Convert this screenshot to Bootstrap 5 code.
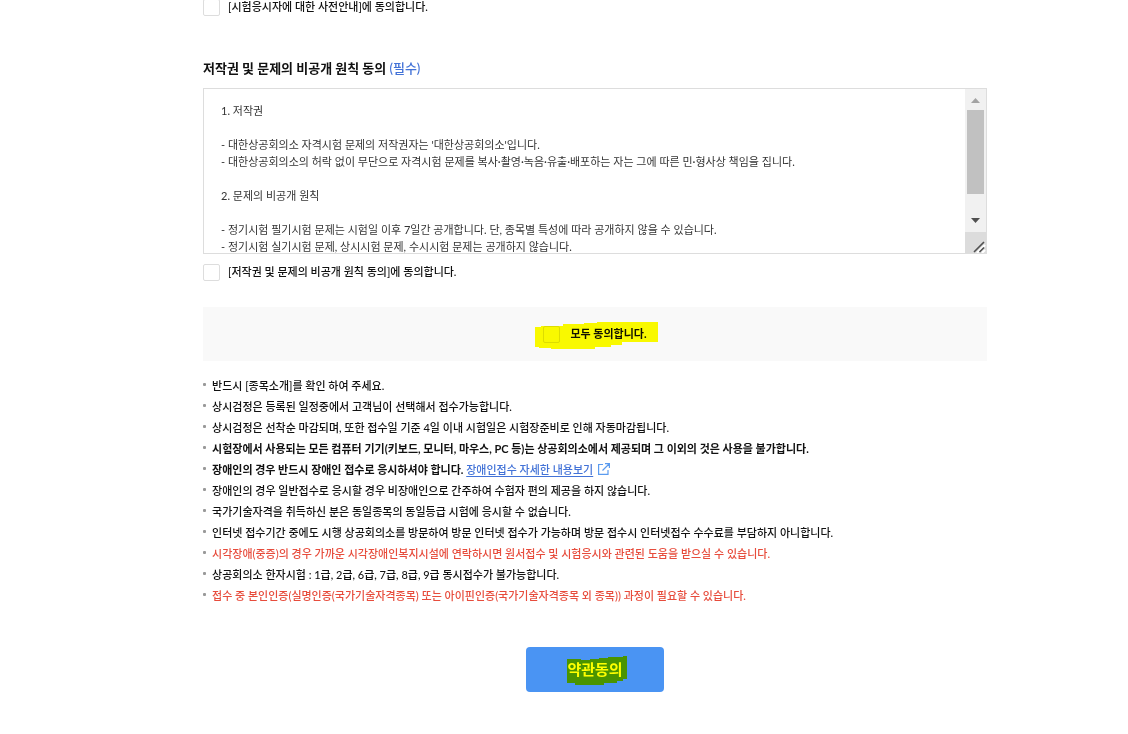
<!DOCTYPE html>
<html lang="ko">
<head>
<meta charset="utf-8">
<meta name="viewport" content="width=device-width, initial-scale=1">
<title>약관동의</title>
<link href="https://cdn.jsdelivr.net/npm/bootstrap@5.3.0/dist/css/bootstrap.min.css" rel="stylesheet">
<style>
body { font-family: Lato, "Noto Sans CJK KR", sans-serif; font-size: 11px; line-height: 21px; color: #111; background: #fff; overflow-x: hidden; }
.terms-page { padding-left: 18%; padding-right: 12.5%; margin-top: -3px; }
.agree-row { gap: 8px; font-weight: 500; line-height: 20px; }
.agree-row .form-check-input { width: 17px; height: 17px; margin: 0; border: 1px solid #ddd; border-radius: 2px; flex: none; background-color: #fff; }
.terms-title { font-size: 13px; line-height: 20px; font-weight: 700; margin: 41px 0 10px; }
.terms-title span { color: #4272d7; font-weight: 500; }
.terms-box { border: 1px solid #ddd; height: 166px; margin-bottom: 8px; }
.terms-box textarea { font-family: inherit; border: 0; resize: none; overflow: hidden; padding: 13px 17px 0; color: #333; font-size: 11px; line-height: 17px; outline: 0; min-width: 0; }
.scroll-side { width: 21px; background: #f1f1f1; flex: none; }
.scroll-side svg { display: block; }
.agree-all { background: #f9f9f9; height: 54px; margin: 25px 0 14px; }
.agree-all .agree-row { gap: 10px; position: relative; font-weight: 700; }
.agree-all .form-check-input { background-color: transparent; }
.marker { position: absolute; mix-blend-mode: multiply; pointer-events: none; }
.marker-all { left: -8px; top: -3px; }
.marker-btn { left: 41px; top: 8px; }
.notice-list { margin: 0 0 41px; font-weight: 500; }
.notice-list li { display: flex; }
.notice-list li::before { content: ""; width: 3px; height: 3px; border-radius: 1px; background: #999; margin: 8px 6px 0 0; flex: none; }
.notice-list strong { font-weight: 700; }
.notice-list a { color: #4272d7; text-underline-offset: 2px; font-weight: 500; }
.notice-list svg { margin-left: 2px; vertical-align: -1px; }
.warn { color: #e74c3c; }
.btn-agree { position: relative; isolation: isolate; width: 138px; height: 45px; background: #4a94f3; color: #fff; font-size: 15px; font-weight: 700; border: 0; border-radius: 4px; padding: 0; }
.btn-agree:hover { background: #3c87e8; color: #fff; }
</style>
</head>
<body>
<main class="terms-page">
  <div class="agree-row d-flex align-items-center">
    <input class="form-check-input" type="checkbox" id="agreeGuide">
    <label for="agreeGuide">[시험응시자에 대한 사전안내]에 동의합니다.</label>
  </div>

  <h2 class="terms-title" id="copyTitle">저작권 및 문제의 비공개 원칙 동의 <span>(필수)</span></h2>
  <div class="terms-box d-flex">
    <textarea class="flex-grow-1" readonly aria-labelledby="copyTitle">1. 저작권

- 대한상공회의소 자격시험 문제의 저작권자는 '대한상공회의소'입니다.
- 대한상공회의소의 허락 없이 무단으로 자격시험 문제를 복사·촬영·녹음·유출·배포하는 자는 그에 따른 민·형사상 책임을 집니다.

2. 문제의 비공개 원칙

- 정기시험 필기시험 문제는 시험일 이후 7일간 공개합니다. 단, 종목별 특성에 따라 공개하지 않을 수 있습니다.
- 정기시험 실기시험 문제, 상시시험 문제, 수시시험 문제는 공개하지 않습니다.</textarea>
    <div class="scroll-side" aria-hidden="true">
      <svg width="21" height="164" viewBox="0 0 21 164">
        <path d="M6 14h9l-4.500-5z" fill="#a3a3a3"/>
        <path d="M2 21h17v84H2z" fill="#c1c1c1"/>
        <path d="M6 129h9l-4.500 5z" fill="#505050"/>
        <path d="M0 143h21v21H0z" fill="#dcdcdc"/>
        <path d="M11 163l8-8M16 163l3-3" stroke="#fff" stroke-width="2" transform="translate(1 1)"/>
        <path d="M9 163l10-10M14.500 163l4.500-4.500" stroke="#505050" stroke-width="1.600"/>
      </svg>
    </div>
  </div>
  <div class="agree-row d-flex align-items-center">
    <input class="form-check-input" type="checkbox" id="agreeCopy">
    <label for="agreeCopy">[저작권 및 문제의 비공개 원칙 동의]에 동의합니다.</label>
  </div>

  <div class="agree-all d-flex align-items-center justify-content-center">
    <div class="agree-row d-flex align-items-center">
      <input class="form-check-input" type="checkbox" id="agreeAll">
      <label for="agreeAll">모두 동의합니다.</label>
      <svg class="marker marker-all" width="123" height="28" viewBox="0 0 123 28" aria-hidden="true"><path d="M0 6h6V5h22V3h21V2h13V1h61v20H87v3H76v2H60v2H16v-1H4v-1H0z" fill="#ff0"/></svg>
    </div>
  </div>

  <ul class="notice-list list-unstyled">
    <li><div>반드시 [종목소개]를 확인 하여 주세요.</div></li>
    <li><div>상시검정은 등록된 일정중에서 고객님이 선택해서 접수가능합니다.</div></li>
    <li><div>상시검정은 선착순 마감되며, 또한 접수일 기준 4일 이내 시험일은 시험장준비로 인해 자동마감됩니다.</div></li>
    <li><div><strong>시험장에서 사용되는 모든 컴퓨터 기기(키보드, 모니터, 마우스, PC 등)는 상공회의소에서 제공되며 그 이외의 것은 사용을 불가합니다.</strong></div></li>
    <li><div><strong>장애인의 경우 반드시 장애인 접수로 응시하셔야 합니다.</strong> <a href="#">장애인접수 자세한 내용보기</a>
      <svg width="12" height="12" viewBox="0 0 12 12" fill="none" stroke="#5b9bef" stroke-width="1.200" aria-hidden="true"><path d="M5 1.500H.6v9.900h9.400V7M4.500 7.500L11 1M7 .6h4.400V5"/></svg></div></li>
    <li><div>장애인의 경우 일반접수로 응시할 경우 비장애인으로 간주하여 수험자 편의 제공을 하지 않습니다.</div></li>
    <li><div>국가기술자격을 취득하신 분은 동일종목의 동일등급 시험에 응시할 수 없습니다.</div></li>
    <li><div>인터넷 접수기간 중에도 시행 상공회의소를 방문하여 방문 인터넷 접수가 가능하며 방문 접수시 인터넷접수 수수료를 부담하지 아니합니다.</div></li>
    <li><div class="warn">시각장애(중증)의 경우 가까운 시각장애인복지시설에 연락하시면 원서접수 및 시험응시와 관련된 도움을 받으실 수 있습니다.</div></li>
    <li><div>상공회의소 한자시험 : 1급, 2급, 6급, 7급, 8급, 9급 동시접수가 불가능합니다.</div></li>
    <li><div class="warn">접수 중 본인인증(실명인증(국가기술자격종목) 또는 아이핀인증(국가기술자격종목 외 종목)) 과정이 필요할 수 있습니다.</div></li>
  </ul>

  <div class="text-center">
    <button type="button" class="btn btn-agree">약관동의
      <svg class="marker marker-btn" width="61" height="30" viewBox="0 0 61 30" aria-hidden="true"><path d="M0 4h14v1h9V4h9V3h9V2h15V1h4v23h-4v2h-6v2H37v2H8v-2H0z" fill="#ff0"/></svg>
    </button>
  </div>
</main>
<script src="https://cdn.jsdelivr.net/npm/bootstrap@5.3.0/dist/js/bootstrap.bundle.min.js"></script>
</body>
</html>
